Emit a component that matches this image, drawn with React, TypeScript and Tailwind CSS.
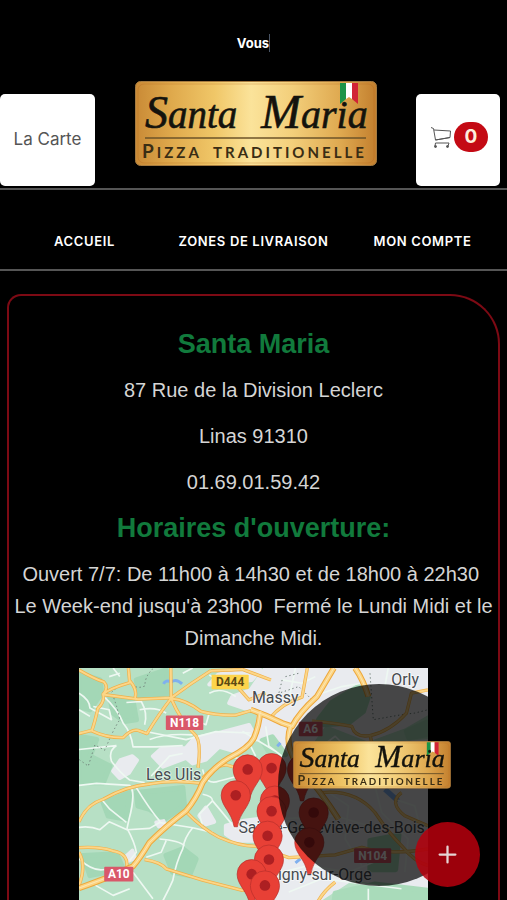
import React, { useId } from 'react';
import { Plus } from 'lucide-react';

interface Pin {
    x: number;
    y: number;
}

interface RoadSign {
    label: string;
    x: number;
    y: number;
    w: number;
    fill: string;
    color: string;
}

const NAV_LINKS = [
    { label: 'ACCUEIL', href: '#accueil' },
    { label: 'ZONES DE LIVRAISON', href: '#zones' },
    { label: 'MON COMPTE', href: '#compte' },
];

const PINS: Pin[] = [
    { x: 700, y: 330 },
    { x: 735, y: 460 },
    { x: 722, y: 550 },
    { x: 608, y: 326 },
    { x: 536, y: 330 },
    { x: 500, y: 408 },
    { x: 618, y: 424 },
    { x: 608, y: 456 },
    { x: 596, y: 530 },
    { x: 600, y: 602 },
    { x: 548, y: 646 },
    { x: 588, y: 680 },
];

const SIGNS: RoadSign[] = [
    { label: 'D444', x: 427, y: 44, w: 112, fill: '#fdd44b', color: '#5c4a12' },
    { label: 'N118', x: 289, y: 167, w: 113, fill: '#d9586a', color: '#ffffff' },
    { label: 'A10', x: 103, y: 624, w: 88, fill: '#d9586a', color: '#ffffff' },
    { label: 'A6', x: 690, y: 186, w: 72, fill: '#d9586a', color: '#ffffff' },
    { label: 'N104', x: 857, y: 568, w: 112, fill: '#d9586a', color: '#ffffff' },
];

// Routes principales (orange)
const MAIN_ROADS = [
    'M27 30 Q70 55 102 66 Q118 82 100 104 L205 118 L305 114 Q365 70 425 32',
    'M98 104 Q120 85 180 68 L176 24 M180 62 Q204 90 196 114',
    'M100 104 Q105 125 84 146 Q74 190 66 212 L27 222 M66 214 Q110 235 160 234 Q185 208 204 212 L232 222 Q270 160 305 116',
    'M304 24 L305 116 Q335 185 374 222 Q398 240 386 325',
    'M305 116 Q350 120 395 155 Q445 168 500 166 L555 150',
    'M425 32 Q500 30 520 28 L606 60',
    'M27 488 Q50 435 100 420 Q170 380 240 374 Q310 360 395 372',
    'M400 356 Q430 320 470 316 L520 330',
    'M348 456 Q400 510 450 535 Q510 562 560 562 L660 596 L800 588 L880 565 Q960 590 1080 570',
    'M27 566 Q90 562 130 576 Q180 585 170 630',
    'M27 580 Q50 620 27 680',
    'M225 602 Q275 610 290 630 L400 664 L520 695 Q560 680 600 690',
    'M600 178 Q640 130 700 112 L716 24',
    'M730 184 Q800 190 850 200 Q860 235 905 228 Q965 215 1015 160 L1030 100 L1080 90',
    'M905 225 L915 270 M760 400 Q860 390 920 460 Q960 520 1000 560 Q1040 610 1080 620',
    'M1000 400 Q960 430 1010 470 L1080 500 M740 744 Q760 700 800 670',
    'M500 75 L540 120 L590 100',
];

// Autoroutes, tracées plus épaisses
const HIGHWAYS = [
    'M27 688 Q110 660 190 622 Q210 600 240 550 Q290 500 350 455 Q380 420 400 370 Q430 325 480 295 Q540 265 555 235 Q570 200 574 155',
    'M545 150 Q590 165 640 190 L670 200 Q690 160 745 110 L796 24',
    'M860 24 Q885 60 900 110',
    'M665 200 Q645 260 690 320 Q760 400 810 480',
];

const MINOR_ROADS = [
    'M98 106 Q145 150 160 190 Q185 220 190 262 L260 262 L340 258',
    'M27 100 Q60 120 60 145 L125 180 L118 150 L70 140 M118 50 L150 40',
    'M170 128 L215 125 Q235 160 225 195 M225 215 L350 240 L440 216 L545 220',
    'M27 270 L140 258 M140 258 Q115 275 125 305 Q150 340 180 362 L225 370',
    'M27 378 L80 372 L180 378 Q200 400 178 480 L172 508 Q195 550 200 580 L180 605',
    'M27 505 Q60 500 90 512 L118 488 L172 512 L240 508 L270 490 L370 506 L430 520',
    'M200 385 Q240 450 272 488 M95 420 L120 450 L170 490',
    'M370 506 Q345 535 340 570 Q320 610 310 665 Q295 700 270 744',
    'M27 600 Q70 640 105 632 M190 640 Q220 680 250 720 M60 670 L130 710 L180 690',
    'M400 405 Q430 410 430 425 Q460 460 500 510 M430 425 L390 465 L400 500 M400 330 Q410 380 450 365 L500 352',
    'M270 540 Q330 545 345 560 M230 595 L275 580 L290 545',
    'M240 240 Q290 220 370 226 M245 350 L300 290 L340 282',
    'M420 100 Q455 80 500 110 M450 60 L420 45 M520 215 L620 275 M590 200 L600 260 L640 290',
    'M540 250 L560 290 M480 290 L560 310 M350 170 L410 195 L420 160',
    'M640 60 L700 70 L740 50 M680 24 L660 120 M760 100 L820 80 L880 70 M960 24 L950 80',
    'M630 480 L800 470 L900 500 M780 400 L840 440 L830 540 L880 620 M920 380 L940 460 L1020 540 L1010 640',
    'M640 640 L720 620 L840 640 L940 600 M660 700 L760 660 L1000 690 M900 690 L900 744',
    'M27 150 L60 170 M130 24 L150 50 M210 150 Q260 140 290 160 M340 40 L370 24',
    'M960 290 L1010 340 L1080 350 M760 260 L800 230 L830 260 M980 420 L1040 440 L1060 520',
];

const URBAN = [
    'M590 24 L1080 24 L1080 160 L1010 200 L900 240 L770 190 L720 260 L650 270 L610 230 L560 240 L570 160 L480 130 L490 110 L545 90 Z',
    'M250 290 L275 268 L350 265 L375 236 L450 220 L540 196 L556 225 L500 276 L450 262 L410 300 L370 312 L350 295 L280 322 Z',
    'M130 335 L152 302 L188 290 L202 302 L178 340 L150 356 Z',
    'M420 74 L447 44 L500 30 L575 30 L548 60 Z',
    'M470 500 L525 485 L640 470 L660 340 L800 380 L1080 380 L1080 690 L850 660 L720 744 L600 744 L630 640 L570 545 L500 545 L470 525 Z',
    'M640 275 L1080 245 L1080 380 L640 380 Z',
    'M390 470 L410 445 L435 488 L410 496 Z M170 592 L188 575 L196 598 L175 606 Z M260 490 L282 486 L286 498 L268 502 Z',
];

const WOODS = [
    'M27 40 L90 60 L95 100 L60 150 L27 140 Z',
    'M27 230 L80 240 L60 290 L120 320 L100 370 L27 370 Z',
    'M120 110 L190 125 L200 180 L165 185 L130 160 Z',
    'M200 60 L290 30 L300 100 L210 110 Z',
    'M200 400 L340 385 L345 440 L285 480 L240 450 L205 440 Z',
    'M100 430 L180 400 L170 480 L115 470 Z',
    'M40 590 L140 585 L160 630 L60 650 Z',
    'M290 590 L340 570 L380 600 L360 650 L310 640 Z',
];

const PARKS = [
    'M750 180 L790 128 L870 80 L900 110 L885 155 L840 190 L765 195 Z',
    'M1015 215 L1075 188 L1075 225 L1022 235 Z M905 545 L992 528 L982 632 L905 632 Z',
    'M800 704 L920 676 L1080 695 L1080 744 L795 744 Z',
    'M580 243 L610 232 L650 285 L604 284 Z',
];

// Panneau doré de la pizzeria
function Logo({ height, className }: { height: number; className: string }) {
    const id = useId();
    const wide = height < 80;
    const baseline = wide ? 40 : 47;
    const rule = wide ? 50 : 57;
    const sub = wide ? 67 : 77;

    return (
        <svg viewBox={`0 0 242 ${height}`} className={className} role="img" aria-label="Santa Maria">
            <defs>
                <linearGradient id={id} x1="0" y1="0" x2="1" y2="0">
                    <stop offset="0" stopColor="#c98a36" />
                    <stop offset="0.15" stopColor="#dfa94c" />
                    <stop offset="0.33" stopColor="#f0c768" />
                    <stop offset="0.48" stopColor="#fbe39a" />
                    <stop offset="0.65" stopColor="#f3cf7b" />
                    <stop offset="0.85" stopColor="#dfa950" />
                    <stop offset="1" stopColor="#c37f2e" />
                </linearGradient>
            </defs>
            <rect x="0.5" y="0.5" width="241" height={height - 1} rx="5" fill={`url(#${id})`} stroke="#a57a40" />
            <rect x="3" y="3" width="236" height={height - 6} rx="6" fill="none" stroke="#b5651f" strokeOpacity="0.3" />
            <path d="M205 2h6v16l-6 5z" fill="#1b9448" />
            <path d="M211 2h6v16l-3-2l-3 2z" fill="#fff" />
            <path d="M217 2h6v21l-6-5z" fill="#d12335" />
            <g fill="#14130d" stroke="#14130d" strokeWidth="0.6" fontFamily='"Liberation Serif", serif' fontStyle="italic">
                <text x="10" y={baseline} fontSize="39">
                    <tspan fontSize="46">S</tspan>anta
                </text>
                <text x="126" y={baseline} fontSize="40">
                    <tspan fontSize="48">M</tspan>aria
                </text>
            </g>
            <path d={`M10 ${rule}H231`} stroke="#6d5328" strokeWidth="1.5" />
            <g fill="#3a2d14" fontFamily="Lato, sans-serif" fontWeight="700">
                <text x="7" y={sub} fontSize="15" letterSpacing="3">
                    <tspan fontSize="19">P</tspan>IZZA
                </text>
                <text x="78" y={sub} fontSize="15" letterSpacing="3">TRADITIONELLE</text>
            </g>
        </svg>
    );
}

function DeliveryMap() {
    return (
        <svg
            viewBox="27 24 1053 720"
            className="block w-full"
            role="img"
            aria-label="Carte des zones de livraison"
        >
            <rect x="27" y="24" width="1053" height="720" fill="#b7e0c5" />
            <g fill="#a3d7b6" stroke="#a3d7b6" strokeWidth="16" strokeLinejoin="round">
                {WOODS.map((d) => <path key={d} d={d} />)}
            </g>
            <g fill="#e9ebef" stroke="#e9ebef" strokeWidth="12" strokeLinejoin="round">
                {URBAN.map((d) => <path key={d} d={d} />)}
            </g>
            <g fill="#a9dbba" stroke="#a9dbba" strokeWidth="16" strokeLinejoin="round">
                {PARKS.map((d) => <path key={d} d={d} />)}
            </g>
            <g fill="none" stroke="#7fb0ee" strokeWidth="9">
                <path d="M282 72 Q288 58 306 66 Q320 55 338 72" />
                <path d="M950 390 L990 425" strokeWidth="16" />
                <path d="M680 612 L695 600 M625 260 L635 250" />
            </g>
            <g fill="none" stroke="#eef8f2" strokeWidth="5" strokeLinejoin="round">
                {MINOR_ROADS.map((d) => <path key={d} d={d} />)}
            </g>
            <g fill="none" stroke="#6f7f78" strokeWidth="3" strokeDasharray="4 8">
                <path d="M250 26 Q225 50 226 78 Q200 90 180 68 Q140 80 125 98 Q140 130 150 180 Q130 210 105 272 L75 256 L55 320 L27 300" />
                <path d="M640 60 L630 100 L690 80 L730 120 M650 50 L690 40 M905 40 L915 180 L1000 165 L1040 160 L1080 150" />
            </g>
            <g fill="none" strokeLinejoin="round">
                <g stroke="#efb04a" strokeWidth="10">
                    {MAIN_ROADS.map((d) => <path key={d} d={d} />)}
                </g>
                <g stroke="#fcd688" strokeWidth="6">
                    {MAIN_ROADS.map((d) => <path key={d} d={d} />)}
                </g>
                <g stroke="#eda63a" strokeWidth="18">
                    {HIGHWAYS.map((d) => <path key={d} d={d} />)}
                </g>
                <g stroke="#fcd583" strokeWidth="12">
                    {HIGHWAYS.map((d) => <path key={d} d={d} />)}
                </g>
                <g stroke="#fbe6b8" strokeWidth="3">
                    {HIGHWAYS.map((d) => <path key={d} d={d} />)}
                </g>
            </g>
            <g fontFamily="Roboto, sans-serif" fontWeight="700" fontSize="36" textAnchor="middle">
                {SIGNS.map((sign) => (
                    <g key={sign.label}>
                        <rect x={sign.x} y={sign.y} width={sign.w} height="44" rx="3" fill={sign.fill} />
                        <text x={sign.x + sign.w / 2} y={sign.y + 35} fill={sign.color}>{sign.label}</text>
                    </g>
                ))}
            </g>
            <g
                fontFamily="Roboto, sans-serif"
                fontSize="48"
                fill="#474b50"
                stroke="#fff"
                strokeWidth="5"
                strokeOpacity="0.6"
                paintOrder="stroke"
            >
                <text x="549" y="131">Massy</text>
                <text x="969" y="74">Orly</text>
                <text x="229" y="361">Les Ulis</text>
                <text x="508" y="522">Sainte-Geneviève-des-Bois</text>
                <text x="910" y="664" textAnchor="end">Savigny-sur-Orge</text>
            </g>
            {PINS.map((pin) => (
                <g key={`${pin.x}-${pin.y}`} transform={`translate(${pin.x} ${pin.y})`}>
                    <path
                        d="M-44 0A44 44 0 0 1 44 0C44 34 12 50 5 95H-5C-12 50 -44 34 -44 0Z"
                        fill="#e84036"
                        stroke="#b52d2a"
                        strokeWidth="2"
                    />
                    <circle r="16" fill="#ad1f22" />
                </g>
            ))}
        </svg>
    );
}

// Petit chariot au trait fin
function CartIcon() {
    return (
        <svg viewBox="0 0 21 22" className="h-[22px] w-[21px]" fill="none" stroke="#555" strokeWidth="1" aria-hidden="true">
            <path d="M0 1.5L2.5 2.5L4.5 14L19 11.5L19.5 5L3 4" />
            <path d="M4.5 14L19 11.5M4 20L4.5 17H18L17 20" />
            <circle cx="4.5" cy="20.5" r="1" fill="#555" />
            <circle cx="16.5" cy="20.5" r="1" fill="#555" />
        </svg>
    );
}

export default function App() {
    return (
        <div className="flex h-screen flex-col overflow-hidden bg-black font-[Inter,sans-serif] text-white">
            <p className="flex justify-center pt-[34px] pb-[29px] text-[13px] leading-[18px] font-bold">
                <span className="border-r border-gray-600">Vous</span>
            </p>

            <header className="flex items-start justify-between border-b-2 border-[#555] pr-[7px] pb-[2px]">
                <button className="mt-[13px] h-[92px] w-[95px] rounded-[5px] bg-white text-[17px] text-[#555]">
                    La Carte
                </button>
                <a href="#accueil" className="block w-[242px]">
                    <Logo height={85} className="block w-full" />
                </a>
                <button
                    aria-label="Panier"
                    className="mt-[13px] flex h-[92px] w-[84px] items-center justify-center rounded-[5px] bg-white pb-[6px] pl-[3px]"
                >
                    <CartIcon />
                    <span className="ml-0.5 flex h-[30px] w-[34px] items-center justify-center rounded-full bg-[#c40a14] text-[19px] font-bold text-[#fdeedd]">
                        0
                    </span>
                </button>
            </header>

            <nav className="grid grid-cols-3 border-b-2 border-[#555] pt-[41px] pb-[18px] text-center">
                {NAV_LINKS.map((link) => (
                    <a key={link.href} href={link.href} className="text-[13px] leading-5 font-semibold tracking-wider whitespace-nowrap">
                        {link.label}
                    </a>
                ))}
            </nav>

            <main className="mx-[7px] mt-[23px] flex min-h-0 flex-1 flex-col gap-[14px] overflow-hidden rounded-tl-[14px] rounded-tr-[50px] border-2 border-b-0 border-[#7d0a14] pt-8 text-center font-['Liberation_Sans',sans-serif] text-[20px] leading-8 text-[#d5d5d5]">
                <h1 className="text-[27px] font-bold text-[#117a3c]">Santa Maria</h1>
                <p>87 Rue de la Division Leclerc</p>
                <p>Linas 91310</p>
                <p>01.69.01.59.42</p>
                <h2 className="text-[27px] font-bold text-[#117a3c]">Horaires d'ouverture:</h2>
                <p className="px-1">
                    Ouvert 7/7: De 11h00 à 14h30 et de 18h00 à 22h30&nbsp; Le Week-end jusqu'à 23h00&nbsp; Fermé le Lundi Midi et le Dimanche Midi.
                </p>
                <div className="px-[70px]">
                    <DeliveryMap />
                </div>
            </main>

            {/* Bulle flottante avec le bouton d'ajout */}
            <div className="fixed right-[27px] bottom-[14px] flex size-[202px] justify-center rounded-full bg-black/70 pt-[57px]">
                <a href="#accueil" className="mr-[14px] block w-[158px]">
                    <Logo height={73} className="block w-full" />
                </a>
            </div>
            <button
                aria-label="Ajouter"
                className="fixed right-[27px] bottom-[13px] flex size-[65px] items-center justify-center rounded-full bg-[#b8000d]/85 text-[#e5d5d5]"
            >
                <Plus size={27} strokeWidth={2} />
            </button>
        </div>
    );
}
